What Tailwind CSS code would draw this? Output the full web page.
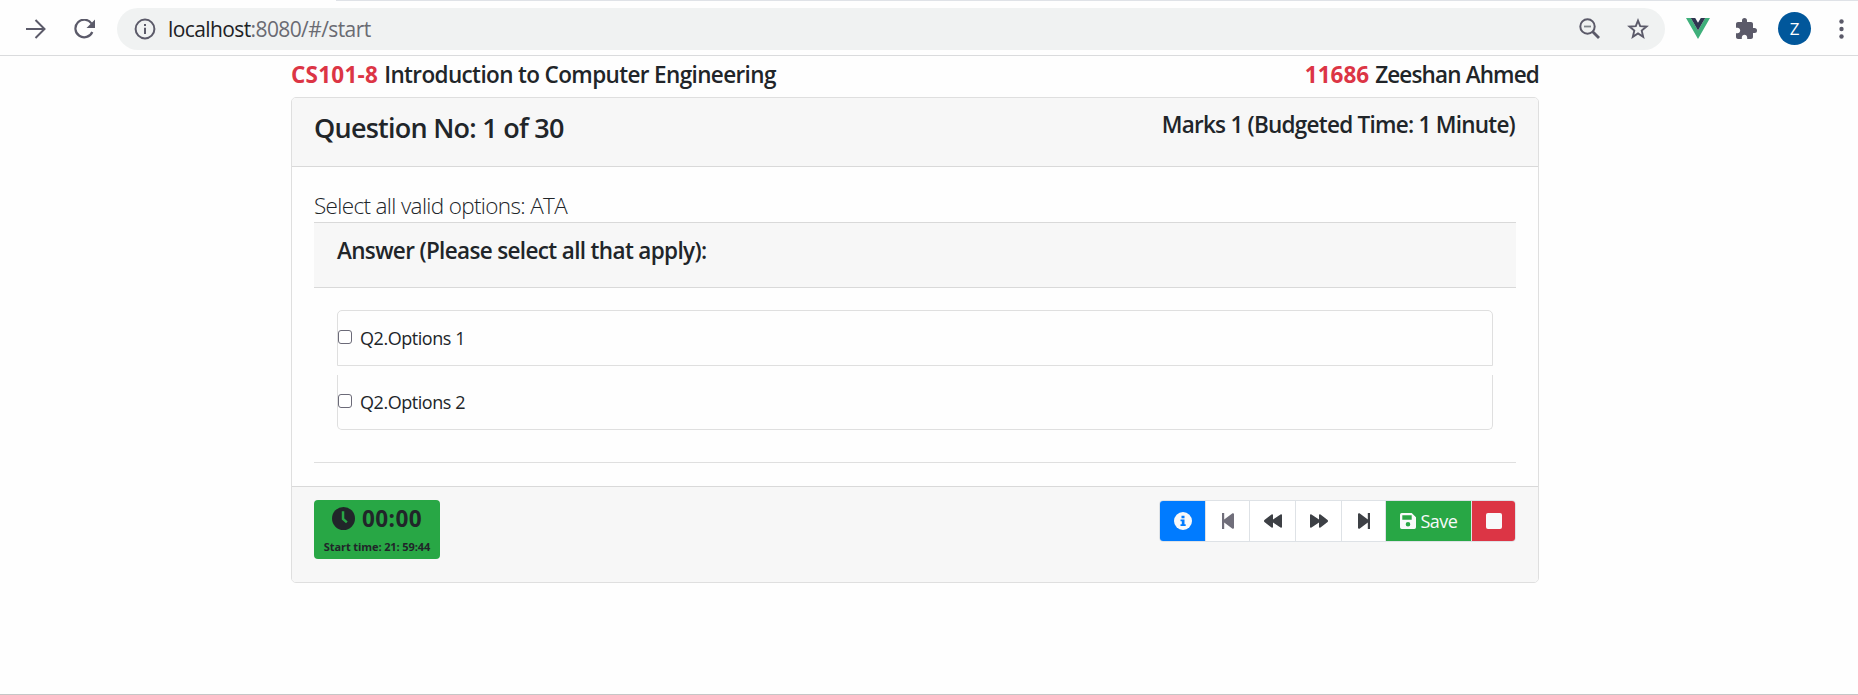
<!DOCTYPE html>
<html lang="en">
<head>
<meta charset="utf-8">
<title>Start</title>
<script src="https://cdn.jsdelivr.net/npm/@tailwindcss/browser@4"></script>
</head>
<body class="flex h-[695px] flex-col overflow-hidden border-b border-[#c6c6c6] bg-[#fefefe] font-['Open_Sans','Noto_Sans',sans-serif] text-[#212529]">
<!-- Browser toolbar -->
<div class="flex h-[56px] shrink-0 flex-col border-b border-[#dadbdd]">
  <div class="ml-[336px] h-px bg-[#dfe2e7]"></div>
  <div class="flex flex-1 items-center pt-px text-[#5b5a69]">
    <svg class="ml-[26px] h-5 w-5" viewBox="0 0 20 20" fill="none" stroke="currentColor" stroke-width="2"><path d="M0 10H19M9.5 1L18.5 10L9.5 19"/></svg>
    <svg class="ml-7 h-[20px] w-[21px]" viewBox="0 0 21 20"><path d="M17.5 4.5A8.8 8.8 0 1 0 18.300 13" fill="none" stroke="currentColor" stroke-width="2.2"/><path d="M21 .5V9H12.500Z" fill="currentColor"/></svg>
    <div class="ml-[22px] flex h-[42px] w-[1548px] items-center rounded-full bg-[#f0f2f2]">
      <svg class="ml-[17px] h-[22px] w-[22px]" viewBox="0 0 22 22"><circle cx="11" cy="11" r="9.400" fill="none" stroke="currentColor" stroke-width="2"/><path d="M10 6h2v2h-2zM10 9.700h2V16h-2z" fill="currentColor"/></svg>
      <div class="ml-3 text-[21px] leading-[42px] tracking-[-0.6px] text-[#6a6b72]"><span class="text-[#202124]">localhost</span>:8080/#/start</div>
      <svg class="ml-auto h-[21px] w-[21px]" viewBox="0 0 21 21" fill="none" stroke="currentColor"><circle cx="8.500" cy="8.500" r="7.200" stroke-width="2"/><path d="M13.500 13.500L20 20" stroke-width="2.800"/><path d="M5 8.500h7" stroke="#80868b" stroke-width="1.800"/></svg>
      <svg class="mr-4 ml-[27px] h-[22px] w-[22px]" viewBox="0 0 22 22" fill="none" stroke="currentColor" stroke-width="1.900"><path d="M11 2.600L13.200 8.200L19.500 8.600L14.700 12.600L16.200 18.900L11 15.500L5.800 18.900L7.300 12.600L2.500 8.600L8.800 8.200Z"/></svg>
    </div>
    <svg class="ml-[21px] h-[21px] w-6" viewBox="0 0 24 21"><path d="M0 0h4.800L12 12.400 19.200 0H24L12 21Z" fill="#3fb07b"/><path d="M4.800 0h4.400L12 4.800 14.800 0h4.400L12 12.400Z" fill="#2f3550"/></svg>
    <svg class="ml-[24px] h-[24px] w-[24px]" viewBox="0 0 24 24" fill="currentColor"><path d="M20.500 11H19V7c0-1.100-.9-2-2-2h-4V3.500a2.500 2.500 0 0 0-5 0V5H4c-1.100 0-1.990.9-1.990 2v3.800H3.500c1.490 0 2.700 1.210 2.700 2.700s-1.210 2.700-2.700 2.700H2V20c0 1.100.9 2 2 2h3.800v-1.500c0-1.490 1.210-2.700 2.700-2.700s2.700 1.210 2.700 2.700V22H17c1.100 0 2-.9 2-2v-4h1.500a2.500 2.500 0 0 0 0-5z"/></svg>
    <div class="ml-5 flex h-[33px] w-[33px] items-center justify-center rounded-full bg-[#01579b] text-[17px] text-white">Z</div>
    <svg class="ml-[28px] h-5 w-[5px]" viewBox="0 0 5 20" fill="currentColor"><circle cx="2.500" cy="2.500" r="2.200"/><circle cx="2.500" cy="10" r="2.200"/><circle cx="2.500" cy="17.500" r="2.200"/></svg>
  </div>
</div>

<main class="ml-[291px] flex w-[1248px] flex-col pt-[5px]">
  <!-- Course and student -->
  <div class="flex h-9 justify-between text-[22.5px] leading-[27px] font-semibold whitespace-nowrap">
    <div class="flex gap-[6px]"><span class="font-bold tracking-[0.25px] text-[#dc3545]">CS101-8</span><span class="tracking-[-0.63px]">Introduction to Computer Engineering</span></div>
    <div class="flex gap-[6px]"><span class="font-bold text-[#dc3545]">11686</span><span class="tracking-[-0.85px]">Zeeshan Ahmed</span></div>
  </div>

  <!-- Question card -->
  <section class="flex h-[486px] flex-col overflow-hidden rounded-[5px] border border-[#dfdfdf]">
    <header class="flex h-[69px] shrink-0 justify-between border-b border-[#d9d9d9] bg-[#f7f7f7] pr-[23px] pl-[22px] pt-[13px] font-semibold whitespace-nowrap">
      <h4 class="pt-px text-[27px] leading-8 tracking-[-0.75px]">Question No: 1 of 30</h4>
      <h5 class="text-[22.5px] leading-[27px] tracking-[-0.75px]">Marks 1 (Budgeted Time: 1 Minute)</h5>
    </header>
    <div class="flex flex-1 flex-col px-[22px] pt-[22px]">
      <p class="h-[33px] text-[22.5px] leading-[34px] font-light tracking-[-0.65px]">Select all valid options: ATA</p>
      <div class="h-[66px] border-y border-[#d9d9d9] bg-[#f7f7f7] px-[23px] pt-3.5"><h5 class="text-[22.5px] leading-[27px] font-semibold tracking-[-0.65px]">Answer (Please select all that apply):</h5></div>
      <div class="mx-[23px] mt-[22px] flex flex-col gap-[9px] text-[18px] leading-[27px] tracking-[-0.45px]">
        <label class="flex h-14 rounded-t-[5px] border border-[#dfdfdf] pt-3.5"><span class="mt-[5px] h-3.5 w-3.5 rounded-[3px] border border-[#6b6a78] bg-white"></span><span class="ml-2">Q2.Options 1</span></label>
        <label class="flex h-[55px] rounded-b-[5px] border border-t-0 border-[#dfdfdf] pt-3.5"><span class="mt-[5px] h-3.5 w-3.5 rounded-[3px] border border-[#6b6a78] bg-white"></span><span class="ml-2">Q2.Options 2</span></label>
      </div>
      <div class="mt-8 h-px bg-[#dfdfdf]"></div>
    </div>
    <footer class="flex h-[96px] shrink-0 items-start justify-between border-t border-[#d9d9d9] bg-[#f7f7f7] px-[22px] pt-[13px]">
      <div class="flex h-[59px] w-[126px] flex-col items-center rounded-[4px] bg-[#28a745] font-bold whitespace-nowrap">
        <div class="flex items-center gap-[7px] pt-[5px] text-[22.5px] leading-[27px] tracking-[0.4px]">
          <svg class="h-[23px] w-[23px]" viewBox="0 0 24 24"><circle cx="12" cy="12" r="12" fill="currentColor"/><path d="M11.500 4.500V12.500L15.500 16" fill="none" stroke="#28a745" stroke-width="2.600"/></svg>
          <span>00:00</span>
        </div>
        <div class="pt-[7px] text-[11px] leading-[15px] tracking-[-0.1px]">Start time: 21: 59:44</div>
      </div>
      <div class="flex h-[42px] w-[357px] divide-x divide-[#dee2e6] overflow-hidden rounded-[4px] border border-[#dee2e6] bg-white text-[#3d4045]">
        <button class="flex w-[46px] items-center justify-center bg-[#007bff] text-[#f8f9fa]"><svg class="h-[18px] w-[18px]" viewBox="0 0 18 18"><circle cx="9" cy="9" r="9" fill="currentColor"/><path d="M7.500 3.800h3v2.400h-3zM6.500 7.500h4v4.800h1.200V14H6.500v-1.700h1.300V9.200H6.500z" fill="#007bff"/></svg></button>
        <button class="flex w-[44px] items-center justify-center text-[#706e7a]"><svg class="h-4 w-3" viewBox="0 0 12 16" fill="currentColor"><path d="M0 0h2.200v6.600L10.500.3Q12 0 12 1.200v13.600q0 1.200-1.500.9L2.200 9.400V16H0z"/></svg></button>
        <button class="flex w-[46px] items-center justify-center"><svg class="h-3.5 w-[18px]" viewBox="0 0 18 14" fill="currentColor"><path d="M.4 6.100L7.500.5Q9 0 9 1.300V5.400L16.500.5Q18 0 18 1.300v11.400q0 1.300-1.500.8L9 8.600v4.100q0 1.300-1.500.8L.4 7.900Q-.4 7 .4 6.100z"/></svg></button>
        <button class="flex w-[46px] items-center justify-center"><svg class="h-3.5 w-[18px] -scale-x-100" viewBox="0 0 18 14" fill="currentColor"><path d="M.4 6.100L7.500.5Q9 0 9 1.300V5.400L16.500.5Q18 0 18 1.300v11.400q0 1.300-1.500.8L9 8.600v4.100q0 1.300-1.500.8L.4 7.900Q-.4 7 .4 6.100z"/></svg></button>
        <button class="flex w-[44px] items-center justify-center"><svg class="h-4 w-3 -scale-x-100" viewBox="0 0 12 16" fill="currentColor"><path d="M0 0h2.200v6.600L10.500.3Q12 0 12 1.200v13.600q0 1.200-1.500.9L2.200 9.400V16H0z"/></svg></button>
        <button class="flex w-[86px] items-center justify-center gap-[5px] bg-[#28a745] text-[18px] tracking-[-0.5px] text-[#f8f9fa]"><svg class="h-4 w-4" viewBox="0 0 16 16"><path fill="currentColor" fill-rule="evenodd" d="M1.700 0H11.700L16 4.300V14.300A1.700 1.700 0 0 1 14.300 16H1.700A1.700 1.700 0 0 1 0 14.300V1.700A1.700 1.700 0 0 1 1.700 0zM2.300 2.300V6.700H11.700V2.300zM8 9A2.300 2.300 0 1 0 8 13.600A2.300 2.300 0 1 0 8 9z"/></svg>Save</button>
        <button class="flex flex-1 items-center justify-center bg-[#dc3545]"><span class="h-4 w-4 rounded-[2px] bg-[#f8f9fa]"></span></button>
      </div>
    </footer>
  </section>
</main>
</body>
</html>
